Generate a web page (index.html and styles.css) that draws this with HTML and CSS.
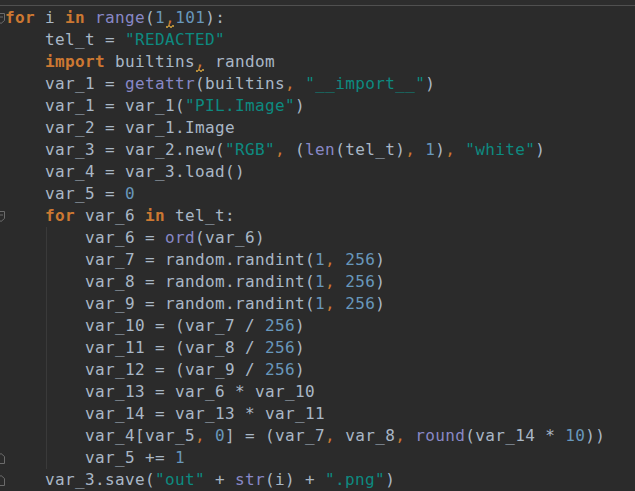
FILE: index.html
```html
<!DOCTYPE html>
<html>
<head>
<meta charset="utf-8">
<link rel="stylesheet" href="styles.css">
</head>
<body>
<div class="editor">
  <div class="tabs"></div>
  <div class="code">
    <div class="line"><div class="gutter"><svg class="fold" width="9" height="11" viewBox="0 0 9 11"><path d="M0.5 0.5h7v7l-3.5 3l-3.5-3z" fill="none" stroke="#6b6b6b"/><path d="M2 4h4" stroke="#6b6b6b"/></svg></div><div class="c i0"><span class="k">for</span> i <span class="k">in</span> <span class="b">range</span>(<span class="n">1</span><span class="o warn">,</span><span class="n">101</span>):</div></div>
    <div class="line"><div class="gutter"></div><div class="c i1">tel_t = <span class="s">"REDACTED"</span></div></div>
    <div class="line"><div class="gutter"></div><div class="c i1"><span class="k">import</span> builtins<span class="o warn">,</span> random</div></div>
    <div class="line"><div class="gutter"></div><div class="c i1">var_1 = <span class="b">getattr</span>(builtins<span class="o">,</span> <span class="s">"__import__"</span>)</div></div>
    <div class="line"><div class="gutter"></div><div class="c i1">var_1 = var_1(<span class="s">"PIL.Image"</span>)</div></div>
    <div class="line"><div class="gutter"></div><div class="c i1">var_2 = var_1.Image</div></div>
    <div class="line"><div class="gutter"></div><div class="c i1">var_3 = var_2.new(<span class="s">"RGB"</span><span class="o">,</span> (<span class="b">len</span>(tel_t)<span class="o">,</span> <span class="n">1</span>)<span class="o">,</span> <span class="s">"white"</span>)</div></div>
    <div class="line"><div class="gutter"></div><div class="c i1">var_4 = var_3.load()</div></div>
    <div class="line"><div class="gutter"></div><div class="c i1">var_5 = <span class="n">0</span></div></div>
    <div class="line"><div class="gutter"><svg class="fold" width="9" height="11" viewBox="0 0 9 11"><path d="M0.5 0.5h7v7l-3.5 3l-3.5-3z" fill="none" stroke="#6b6b6b"/><path d="M2 4h4" stroke="#6b6b6b"/></svg></div><div class="c i1"><span class="k">for</span> var_6 <span class="k">in</span> tel_t:</div></div>
    <div class="line"><div class="gutter"></div><div class="c i2">var_6 = <span class="b">ord</span>(var_6)</div></div>
    <div class="line"><div class="gutter"></div><div class="c i2">var_7 = random.randint(<span class="n">1</span><span class="o">,</span> <span class="n">256</span>)</div></div>
    <div class="line"><div class="gutter"></div><div class="c i2">var_8 = random.randint(<span class="n">1</span><span class="o">,</span> <span class="n">256</span>)</div></div>
    <div class="line"><div class="gutter"></div><div class="c i2">var_9 = random.randint(<span class="n">1</span><span class="o">,</span> <span class="n">256</span>)</div></div>
    <div class="line"><div class="gutter"></div><div class="c i2">var_10 = (var_7 / <span class="n">256</span>)</div></div>
    <div class="line"><div class="gutter"></div><div class="c i2">var_11 = (var_8 / <span class="n">256</span>)</div></div>
    <div class="line"><div class="gutter"></div><div class="c i2">var_12 = (var_9 / <span class="n">256</span>)</div></div>
    <div class="line"><div class="gutter"></div><div class="c i2">var_13 = var_6 * var_10</div></div>
    <div class="line"><div class="gutter"></div><div class="c i2">var_14 = var_13 * var_11</div></div>
    <div class="line"><div class="gutter"></div><div class="c i2">var_4[var_5<span class="o">,</span> <span class="n">0</span>] = (var_7<span class="o">,</span> var_8<span class="o">,</span> <span class="b">round</span>(var_14 * <span class="n">10</span>))</div></div>
    <div class="line"><div class="gutter"><svg class="fold" width="9" height="11" viewBox="0 0 9 11"><path d="M0.5 10.5h7v-7l-3.5-3l-3.5 3z" fill="none" stroke="#6b6b6b"/></svg></div><div class="c i2">var_5 += <span class="n">1</span></div></div>
    <div class="line"><div class="gutter"><svg class="fold" width="9" height="11" viewBox="0 0 9 11"><path d="M0.5 10.5h7v-7l-3.5-3l-3.5 3z" fill="none" stroke="#6b6b6b"/></svg></div><div class="c i1">var_3.save(<span class="s">"out"</span> + <span class="b">str</span>(i) + <span class="s">".png"</span>)</div></div>
  </div>
</div>
</body>
</html>
```

FILE: styles.css
```css
html, body {
  margin: 0;
  padding: 0;
  background: #2b2b2b;
}
.editor {
  width: 635px;
  height: 491px;
  overflow: hidden;
  background: #2b2b2b;
}
.tabs {
  height: 5px;
  background: #2d2d2d;
  border-bottom: 1px solid #505050;
}
.code {
  padding-top: 1px;
  font-family: "DejaVu Sans Mono", monospace;
  font-size: 16px;
  letter-spacing: 0.37px;
  color: #a9b7c6;
}
.line {
  display: flex;
  height: 22px;
  line-height: 22px;
  white-space: pre;
}
.gutter {
  width: 5px;
  flex: none;
  overflow: hidden;
}
.fold {
  display: block;
  margin-left: -3px;
  margin-top: 6px;
}
.c {
  flex: 1;
}
.i0 { padding-left: 0; }
.i1 { padding-left: 40px; }
.i2 {
  padding-left: 80px;
  background: linear-gradient(#3a3a3a, #3a3a3a) no-repeat 41px 0 / 1px 100%;
}
.k { color: #cc7832; font-weight: bold; }
.o { color: #cc7832; }
.s { color: #0d8a80; }
.n { color: #6897bb; }
.b { color: #8888c6; }
.warn {
  position: relative;
}
.warn::after {
  content: "";
  position: absolute;
  left: 1px;
  top: 17px;
  width: 8px;
  height: 3px;
  background:
    linear-gradient(135deg, transparent 40%, #b08a3a 40%, #b08a3a 60%, transparent 60%) 0 0 / 4px 3px repeat-x,
    linear-gradient(45deg, transparent 40%, #b08a3a 40%, #b08a3a 60%, transparent 60%) 2px 0 / 4px 3px repeat-x;
}
```
